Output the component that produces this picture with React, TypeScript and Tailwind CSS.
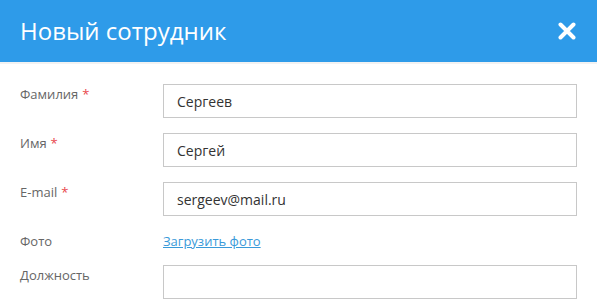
import { useState } from "react";

const Row = ({
  label,
  required,
  children,
}: {
  label: string;
  required?: boolean;
  children: any;
}) => {
  return (
    <div className="flex items-start">
      <div className="w-[143px] shrink-0 text-[13px] leading-[20px] text-[#666]">
        {label}
        {required && <span className="ml-1 text-[#e8474c]">*</span>}
      </div>
      <div className="flex-1">{children}</div>
    </div>
  );
};

const Field = ({ value }: { value: string }) => {
  const [v, setV] = useState(value);
  return (
    <input
      value={v}
      onChange={(e) => setV(e.target.value)}
      className="block h-[34px] w-full border border-[#c8c8c8] bg-white px-[13px] text-[14px] text-[#333] outline-none"
    />
  );
};

export default function App() {
  return (
    <div
      className="w-[597px] h-[307px] overflow-hidden bg-white"
      style={{ fontFamily: '"Open Sans", "Noto Sans", sans-serif' }}
    >
      <div className="flex h-[62px] items-center justify-between bg-[#2e9be9] pl-5 pr-[21px] border-b-2 border-[#f2f2f2] box-content">
        <h1 className="text-[24px] font-normal text-white">Новый сотрудник</h1>
        <button className="text-white">
          <svg width="18" height="18" viewBox="0 0 18 18">
            <path
              d="M2.5 2.5 L15.5 15.5 M15.5 2.5 L2.5 15.5"
              stroke="white"
              strokeWidth="4"
              strokeLinecap="round"
            />
          </svg>
        </button>
      </div>
      <div className="flex flex-col gap-[15px] pl-5 pr-5 pt-5">
        <Row label="Фамилия" required>
          <Field value="Сергеев" />
        </Row>
        <Row label="Имя" required>
          <Field value="Сергей" />
        </Row>
        <Row label="E-mail" required>
          <Field value="sergeev@mail.ru" />
        </Row>
        <div className="h-[19px]">
          <Row label="Фото">
            <a
              href="#"
              className="block w-fit text-[13px] leading-[20px] text-[#3a9ad9] underline"
            >
              Загрузить фото
            </a>
          </Row>
        </div>
        <Row label="Должность">
          <Field value="" />
        </Row>
      </div>
    </div>
  );
}
